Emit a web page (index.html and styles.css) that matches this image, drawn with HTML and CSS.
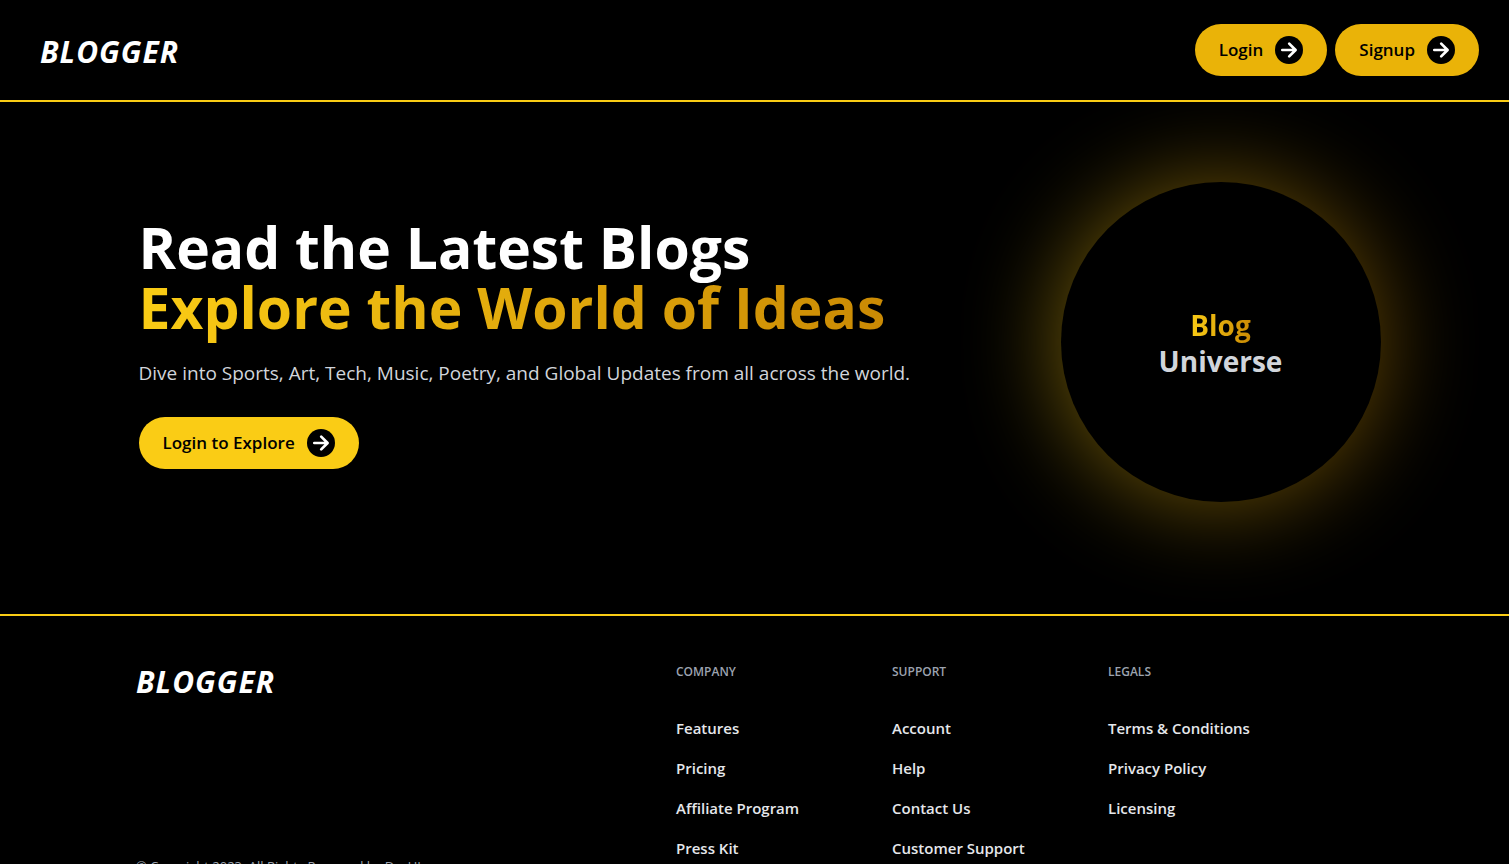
FILE: index.html
```html
<!DOCTYPE html>
<html lang="en">
<head>
<meta charset="utf-8">
<meta name="viewport" content="width=device-width, initial-scale=1">
<title>Blogger</title>
<link rel="stylesheet" href="styles.css">
</head>
<body>
<svg class="sprite" aria-hidden="true">
  <symbol id="arrow" viewBox="0 0 28 28">
    <circle cx="14" cy="14" r="14" fill="#000"/>
    <path d="M7.3 14H20M14.2 7.6L20.6 14L14.2 20.4" fill="none" stroke="#fff" stroke-width="2.7" stroke-linejoin="round" stroke-linecap="round"/>
  </symbol>
</svg>
<header class="header">
  <a class="logo" href="#">BLOGGER</a>
  <nav class="actions">
    <button class="btn" type="button">Login<svg class="btn-icon" aria-hidden="true"><use href="#arrow"/></svg></button>
    <button class="btn" type="button">Signup<svg class="btn-icon" aria-hidden="true"><use href="#arrow"/></svg></button>
  </nav>
</header>
<main class="hero">
  <div class="hero-inner">
    <section class="intro">
      <h1 class="title">Read the Latest Blogs<br><span class="gold">Explore the World of Ideas</span></h1>
      <p class="lead">Dive into Sports, Art, Tech, Music, Poetry, and Global Updates from all across the world.</p>
      <button class="btn btn-bright" type="button">Login to Explore<svg class="btn-icon" aria-hidden="true"><use href="#arrow"/></svg></button>
    </section>
    <div class="orb">
      <h2 class="orb-face"><span class="gold">Blog</span><span>Universe</span></h2>
    </div>
  </div>
</main>
<footer class="footer">
  <div class="footer-brand">
    <a class="logo" href="#">BLOGGER</a>
    <p class="copyright">© Copyright 2023. All Rights Reserved by DevUI.</p>
  </div>
  <section>
    <h3 class="footer-title">Company</h3>
    <ul class="links">
      <li><a href="#">Features</a></li>
      <li><a href="#">Pricing</a></li>
      <li><a href="#">Affiliate Program</a></li>
      <li><a href="#">Press Kit</a></li>
    </ul>
  </section>
  <section>
    <h3 class="footer-title">Support</h3>
    <ul class="links">
      <li><a href="#">Account</a></li>
      <li><a href="#">Help</a></li>
      <li><a href="#">Contact Us</a></li>
      <li><a href="#">Customer Support</a></li>
    </ul>
  </section>
  <section>
    <h3 class="footer-title">Legals</h3>
    <ul class="links">
      <li><a href="#">Terms &amp; Conditions</a></li>
      <li><a href="#">Privacy Policy</a></li>
      <li><a href="#">Licensing</a></li>
    </ul>
  </section>
</footer>
</body>
</html>
```
FILE: styles.css
```css
* { box-sizing: border-box; margin: 0; padding: 0; }
html { scrollbar-width: none; }
body {
  background: #000;
  color: #fff;
  font-family: "Segoe UI", "Open Sans", "Noto Sans", sans-serif;
}
a { color: inherit; text-decoration: none; }
ul { list-style: none; }
.sprite { display: none; }

.header {
  display: flex;
  align-items: center;
  justify-content: space-between;
  padding: 24px 30px 24px 40px;
  border-bottom: 2px solid #facc15;
}
.header .logo { padding-top: 4px; }
.logo {
  font-size: 30px;
  line-height: 36px;
  font-weight: 700;
  font-style: italic;
  letter-spacing: 1px;
}
.actions { display: flex; gap: 8px; }
.btn {
  display: inline-flex;
  align-items: center;
  gap: 12px;
  padding: 12px 24px;
  border: 0;
  border-radius: 26px;
  background: #eab308;
  color: #000;
  font-family: inherit;
  font-size: 17px;
  line-height: 28px;
  font-weight: 600;
  cursor: pointer;
}
.btn-bright { background: #facc15; }
.btn-icon { width: 28px; height: 28px; }

.hero { border-bottom: 2px solid #facc15; overflow: hidden; }
.hero-inner {
  display: flex;
  align-items: center;
  justify-content: space-between;
  max-width: 1280px;
  margin: 0 auto;
  padding: 80px 14px 112px 24px;
}
.intro { padding-top: 2px; }
.title {
  font-size: 57px;
  line-height: 60px;
  font-weight: 700;
}
.gold {
  background: linear-gradient(to right, #facc15, #ca8a04);
  background-clip: text;
  -webkit-background-clip: text;
  color: transparent;
}
.lead {
  margin: 20px 0 28px;
  color: #d1d5db;
  font-size: 19px;
  line-height: 32px;
}
.orb { position: relative; flex: none; width: 320px; height: 320px; }
.orb::before {
  content: "";
  position: absolute;
  inset: 0;
  border-radius: 50%;
  background: linear-gradient(to right, #facc15, #ca8a04);
  filter: blur(48px);
  opacity: 0.5;
}
.orb-face {
  position: relative;
  display: flex;
  flex-direction: column;
  align-items: center;
  justify-content: center;
  height: 100%;
  padding-top: 2px;
  border-radius: 50%;
  background: #000;
  color: #d1d5db;
  font-size: 28px;
  line-height: 36px;
  font-weight: 700;
}

.footer {
  display: grid;
  grid-template-columns: 5fr 2fr 2fr 2fr;
  padding: 48px 185px 48px 136px;
}
.footer-brand {
  display: flex;
  flex-direction: column;
  justify-content: space-between;
  align-items: flex-start;
}
.copyright { color: #9ca3af; font-size: 13px; line-height: 20px; }
.footer-title {
  margin-bottom: 36px;
  color: #9ca3af;
  font-size: 12px;
  line-height: 16px;
  font-weight: 600;
  text-transform: uppercase;
}
.links {
  display: grid;
  gap: 16px;
  padding-bottom: 16px;
  color: #e5e7eb;
  font-size: 15px;
  line-height: 24px;
  font-weight: 600;
}
```
